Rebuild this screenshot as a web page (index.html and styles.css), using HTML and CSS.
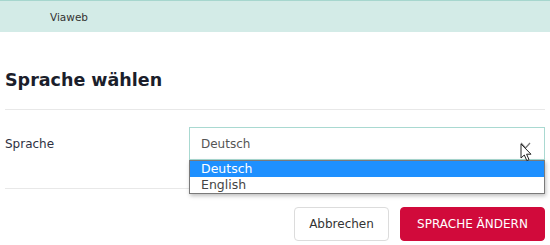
FILE: index.html
```html
<!DOCTYPE html>
<html lang="de">
<head>
<meta charset="utf-8">
<title>Sprache wählen</title>
<link rel="stylesheet" href="styles.css">
</head>
<body>
<header class="topbar"><span class="brand">Viaweb</span></header>
<main class="content">
  <h2 class="title">Sprache wählen</h2>
  <div class="rule"></div>
  <div class="form-row">
    <label class="label">Sprache</label>
    <div class="select-wrap">
      <div class="select">
        <span class="select-value">Deutsch</span>
        <svg class="chevron" width="11" height="8" viewBox="0 0 11 8"><polyline points="1,1 5.5,6 10,1" fill="none" stroke="#777" stroke-width="1.3"/></svg>
      </div>
      <ul class="options">
        <li class="option selected">Deutsch</li>
        <li class="option">English</li>
      </ul>
      <svg class="cursor" width="13" height="19" viewBox="0 0 13 19"><path d="M1 1 L1 15 L4.3 12 L6.8 17.6 L9 16.6 L6.6 11.2 L11 11.2 Z" fill="#fff" stroke="#222" stroke-width="1" stroke-linejoin="round"/></svg>
    </div>
  </div>
  <div class="rule rule-low"></div>
  <div class="actions">
    <button class="btn btn-cancel">Abbrechen</button>
    <button class="btn btn-primary">SPRACHE ÄNDERN</button>
  </div>
</main>
</body>
</html>
```

FILE: styles.css
```css
* { box-sizing: border-box; }
html, body { margin: 0; padding: 0; background: #fff; }
body {
  font-family: "DejaVu Sans", Verdana, sans-serif;
  font-size: 12px;
  color: #333;
  width: 550px;
  height: 245px;
  overflow: hidden;
}
.topbar {
  height: 32px;
  background: #d3ebe7;
  border-top: 1px solid #a6d6ce;
  display: flex;
  align-items: center;
  padding-left: 50px;
}
.brand {
  font-size: 10.5px;
  color: #333;
}
.content {
  padding: 0 5px;
}
.title {
  margin: 38px 0 0;
  font-size: 17.5px;
  line-height: 21px;
  font-weight: bold;
  color: #1b1e2b;
}
.rule {
  height: 1px;
  background: #e8e8e8;
  margin-top: 18px;
}
.form-row {
  display: grid;
  grid-template-columns: 184px 1fr;
  align-items: center;
  margin-top: 17px;
}
.label {
  color: #2e3142;
}
.select-wrap {
  position: relative;
}
.select {
  height: 33px;
  border: 1px solid #a9d9d1;
  display: flex;
  align-items: center;
  padding: 0 12px 0 11px;
  color: #555;
}
.select-value { flex: 1; }
.chevron { margin-top: 4px; margin-right: 1px; }
.options {
  position: absolute;
  left: 0;
  right: 0;
  top: 33px;
  margin: 0;
  padding: 0;
  list-style: none;
  border: 1px solid #7a7a7a;
  background: #fff;
  box-shadow: 1px 2px 4px rgba(0,0,0,0.25);
  z-index: 2;
}
.option {
  height: 16px;
  line-height: 16px;
  padding-left: 11px;
  font-size: 12.5px;
  color: #444;
}
.option.selected {
  background: #1e90ff;
  color: #fff;
}
.cursor {
  position: absolute;
  right: 12px;
  top: 16px;
  z-index: 3;
}
.rule-low {
  margin-top: 28px;
}
.actions {
  display: flex;
  justify-content: flex-end;
  gap: 11px;
  margin-top: 18px;
}
.btn {
  height: 34px;
  font-family: "DejaVu Sans", Verdana, sans-serif;
  font-size: 12px;
  border-radius: 4px;
  padding: 0 14px;
}
.btn-cancel {
  background: #fff;
  border: 1px solid #dcdcdc;
  color: #333;
  width: 95px;
}
.btn-primary {
  background: #d10a3b;
  border: 1px solid #d10a3b;
  color: #fff;
  width: 145px;
}
```
